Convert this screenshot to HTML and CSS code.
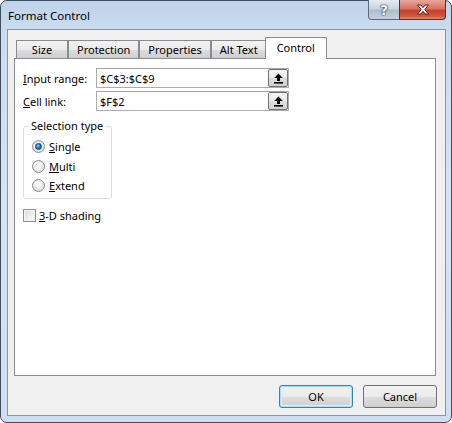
FILE: index.html
```html
<!DOCTYPE html>
<html>
<head>
<meta charset="utf-8">
<title>Format Control</title>
<link rel="stylesheet" href="styles.css">
</head>
<body>
<div class="window">
  <div class="titlebar">
    <span class="title">Format Control</span>
    <div class="caption-buttons">
      <div class="cap-btn help">?</div>
      <div class="cap-btn close">
        <svg width="14" height="11" viewBox="0 0 14 11"><path d="M1.5 1 H5 L7 3.6 L9 1 H12.5 L8.8 5.5 L12.5 10 H9 L7 7.4 L5 10 H1.5 L5.2 5.5 Z" fill="#fff" stroke="#5a1a12" stroke-width="1" stroke-linejoin="round"/></svg>
      </div>
    </div>
  </div>
  <div class="client">
    <div class="tabs">
      <div class="tab">Size</div>
      <div class="tab">Protection</div>
      <div class="tab">Properties</div>
      <div class="tab">Alt Text</div>
      <div class="tab active">Control</div>
    </div>
    <div class="panel">
      <div class="field-row">
        <span class="label"><u>I</u>nput range:</span>
        <div class="ref-input">
          <span class="value">$C$3:$C$9</span>
          <span class="collapse"><svg width="9" height="11" viewBox="0 0 9 11"><path d="M4.5 0.5 L8.8 5 H6 V8 H3 V5 H0.2 Z" fill="#000"/><rect x="0" y="9" width="9" height="1.6" fill="#000"/></svg></span>
        </div>
      </div>
      <div class="field-row">
        <span class="label"><u>C</u>ell link:</span>
        <div class="ref-input">
          <span class="value">$F$2</span>
          <span class="collapse"><svg width="9" height="11" viewBox="0 0 9 11"><path d="M4.5 0.5 L8.8 5 H6 V8 H3 V5 H0.2 Z" fill="#000"/><rect x="0" y="9" width="9" height="1.6" fill="#000"/></svg></span>
        </div>
      </div>
      <div class="group">
        <span class="legend">Selection type</span>
        <div class="radio-row"><span class="radio checked"></span><span><u>S</u>ingle</span></div>
        <div class="radio-row"><span class="radio"></span><span><u>M</u>ulti</span></div>
        <div class="radio-row"><span class="radio"></span><span><u>E</u>xtend</span></div>
      </div>
      <div class="check-row"><span class="checkbox"></span><span><u>3</u>-D shading</span></div>
    </div>
    <div class="buttons">
      <div class="btn default">OK</div>
      <div class="btn">Cancel</div>
    </div>
  </div>
</div>
</body>
</html>
```

FILE: styles.css
```css
* { box-sizing: border-box; }
html, body { margin: 0; padding: 0; background: #ffffff; }
body {
  font-family: "Noto Sans", "Open Sans", sans-serif;
  font-size: 11px;
  color: #000;
  width: 452px;
  height: 423px;
  overflow: hidden;
}
u { text-decoration: underline; text-underline-offset: 1px; }

.window {
  width: 452px;
  height: 423px;
  border: 1px solid #3f4d5e;
  border-radius: 7px;
  background: linear-gradient(180deg, #bfd3ea 0px, #cbdcef 30px, #d6e4f3 200px, #cfdff1 423px);
  padding: 0 5px 6px 6px;
  display: flex;
  flex-direction: column;
}

.titlebar {
  height: 28px;
  display: flex;
  align-items: flex-start;
}
.title {
  font-size: 11.5px;
  padding-left: 1px;
  line-height: 14px;
  margin-top: 8px;
  color: #000;
}
.caption-buttons {
  margin-left: auto;
  margin-top: -1px;
  display: flex;
  height: 20px;
}
.cap-btn {
  height: 20px;
  display: flex;
  align-items: center;
  justify-content: center;
  border: 1px solid #5c6a7c;
  border-top: none;
}
.help {
  width: 31px;
  border-radius: 0 0 0 4px;
  border-right: none;
  background: linear-gradient(180deg, #e3eaf2 0%, #cbd6e2 45%, #aebdcd 55%, #c4d2e0 100%);
  color: #fff;
  font-family: "DejaVu Sans", sans-serif;
  font-weight: bold;
  font-size: 14px;
  text-shadow: 0 0 1px #2c3a4b, 0 0 1px #2c3a4b, 0 0 2px #2c3a4b;
}
.close {
  width: 47px;
  border-radius: 0 0 4px 0;
  background: linear-gradient(180deg, #e6a79c 0%, #d9735f 45%, #c4422c 55%, #d0563c 85%, #e08a6a 100%);
  border-color: #6a2a22;
}

.client {
  flex: 1;
  background: #f0f0f0;
  border: 1px solid #8796a8;
  display: flex;
  flex-direction: column;
  padding: 7px 8px 7px 6px;
}

.tabs {
  display: flex;
  align-items: flex-end;
  height: 21px;
  padding-left: 2px;
}
.tab {
  height: 18px;
  min-width: 52px;
  padding: 0 8px;
  border: 1px solid #898c95;
  border-bottom: none;
  margin-right: -1px;
  background: linear-gradient(180deg, #f3f3f3 0%, #ebebeb 50%, #dddddd 51%, #cfcfcf 100%);
  display: flex;
  align-items: center;
  justify-content: center;
  white-space: nowrap;
}
.tab + .tab { margin-left: 1px; }
.tab.active {
  height: 22px;
  margin-bottom: -1px;
  margin-left: -1px;
  padding: 0 11px 2px;
  background: #ffffff;
  position: relative;
  z-index: 1;
}

.panel {
  flex: 1;
  background: #ffffff;
  border: 1px solid #898c95;
  margin-right: 1px;
  padding: 9px 8px;
  display: flex;
  flex-direction: column;
  align-items: flex-start;
}

.field-row {
  display: flex;
  align-items: center;
  height: 20px;
  margin-bottom: 3px;
}
.label {
  width: 73px;
}
.ref-input {
  width: 193px;
  height: 20px;
  border: 1px solid #abadb3;
  border-top-color: #a0a3a9;
  display: flex;
  align-items: center;
  padding-left: 3px;
}
.value { flex: 1; }
.collapse {
  width: 20px;
  height: 18px;
  border: 1px solid #707070;
  border-radius: 2px;
  background: linear-gradient(180deg, #f6f6f6 0%, #e9e9e9 50%, #dcdcdc 51%, #d2d2d2 100%);
  display: flex;
  align-items: center;
  justify-content: center;
}

.group {
  margin-top: 12px;
  width: 89px;
  height: 73px;
  border: 1px solid #d5dfe5;
  border-radius: 3px;
  padding: 10px 0 0 8px;
  position: relative;
}
.legend {
  position: absolute;
  top: -8px;
  left: 5px;
  padding: 0 2px;
  background: #ffffff;
  line-height: 14px;
  white-space: nowrap;
}
.radio-row {
  display: flex;
  align-items: center;
  height: 19.5px;
}
.radio {
  width: 13px;
  height: 13px;
  border-radius: 50%;
  border: 1px solid #8e8f8f;
  background: radial-gradient(circle at 50% 40%, #ffffff 0%, #e6e6e6 60%, #cfcfcf 100%);
  margin-right: 4px;
  display: flex;
  align-items: center;
  justify-content: center;
}
.radio.checked::after {
  content: "";
  width: 7px;
  height: 7px;
  border-radius: 50%;
  background: radial-gradient(circle at 40% 35%, #8fd0ff 0%, #2a7fd0 45%, #0d3f7e 100%);
  border: 1px solid #174477;
  box-sizing: border-box;
}

.check-row {
  display: flex;
  align-items: center;
  margin-top: 9px;
}
.checkbox {
  width: 13px;
  height: 13px;
  border: 1px solid #8e8f8f;
  background: linear-gradient(135deg, #dcdcdc 0%, #f0f0f0 60%, #ffffff 100%);
  box-shadow: inset 0 0 0 1px #f4f4f4;
  margin-right: 3px;
}

.buttons {
  display: flex;
  justify-content: flex-end;
  gap: 10px;
  margin-top: 9px;
}
.btn {
  width: 74px;
  height: 23px;
  border: 1px solid #707070;
  border-radius: 3px;
  background: linear-gradient(180deg, #f2f2f2 0%, #ebebeb 50%, #dddddd 51%, #cfcfcf 100%);
  display: flex;
  align-items: center;
  justify-content: center;
}
.btn.default {
  border-color: #3c7fb1;
  box-shadow: inset 0 0 0 1px #a6e0ff, inset 0 0 0 2px #d8f0fc;
}
```
